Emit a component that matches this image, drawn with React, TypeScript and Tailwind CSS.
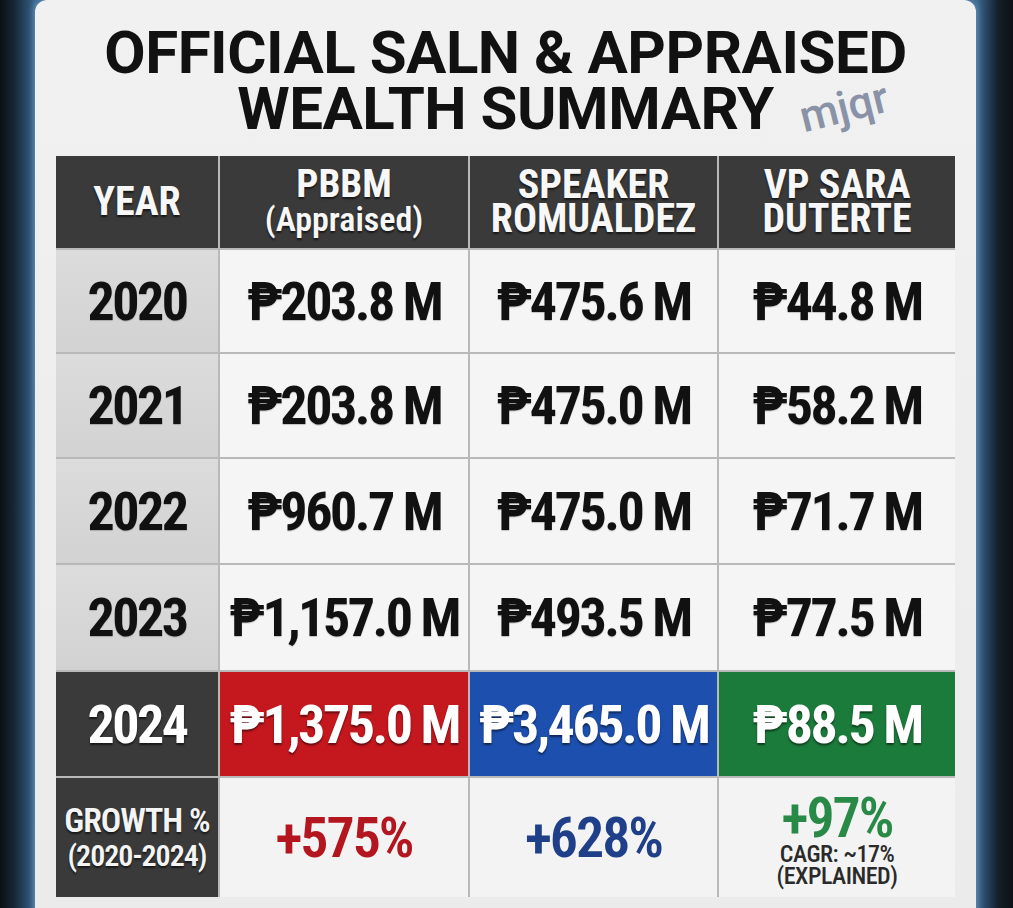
const rows = [
  { year: "2020", v: ["₱203.8 M", "₱475.6 M", "₱44.8 M"] },
  { year: "2021", v: ["₱203.8 M", "₱475.0 M", "₱58.2 M"] },
  { year: "2022", v: ["₱960.7 M", "₱475.0 M", "₱71.7 M"] },
  { year: "2023", v: ["₱1,157.0 M", "₱493.5 M", "₱77.5 M"] },
];

const cond = "font-['Roboto_Condensed','Liberation_Sans_Narrow',sans-serif]";

export default function App() {
  return (
    <div className="w-full h-[908px] overflow-hidden bg-[linear-gradient(to_right,#0c1014_0px,#172634_14px,#30587a_31px,#3d6a90_35px,#3d6a90_977px,#2a4b68_985px,#141f2a_998px,#0c1014_1013px)] pl-[35px]">
      <div className="relative w-[941px] h-[930px] rounded-t-[12px] bg-gradient-to-b from-[#f1f1f1] to-[#ebebeb] shadow-[0_0_6px_1px_rgba(120,160,200,0.7)] pt-[25px] px-[21px]">
        <div className="relative text-center font-['Roboto',sans-serif] font-bold text-[60px] leading-[56px] text-[#111111] tracking-[-0.5px]">
          <div>OFFICIAL SALN &amp; APPRAISED</div>
          <div>WEALTH SUMMARY</div>
          <span className="absolute left-[743px] top-[60px] -rotate-[14deg] font-['Roboto',sans-serif] font-medium text-[44px] leading-[44px] tracking-normal text-[#8a92a7]">
            mjqr
          </span>
        </div>

        <div
          className={`mt-[19px] grid grid-cols-[162px_248px_247px_236px] grid-rows-[92px_102px_103px_104px_105px_104px_119px] gap-[2px] bg-[#b9b9b9] ${cond}`}
        >
          {/* header */}
          <div className="bg-[#3a3a3a] flex items-center justify-center text-[#f7f7f7] font-bold text-[40px] [text-shadow:0_2px_2px_rgba(0,0,0,0.6)]">
            YEAR
          </div>
          <div className="bg-[#3a3a3a] flex flex-col items-center justify-center text-[#f7f7f7] [text-shadow:0_2px_2px_rgba(0,0,0,0.6)]">
            <span className="font-bold text-[39px] leading-[34px]">PBBM</span>
            <span className="font-semibold text-[34px] leading-[36px]">(Appraised)</span>
          </div>
          <div className="bg-[#3a3a3a] flex flex-col items-center justify-center text-[#f7f7f7] font-bold text-[40px] leading-[34px] [text-shadow:0_2px_2px_rgba(0,0,0,0.6)]">
            <span>SPEAKER</span>
            <span>ROMUALDEZ</span>
          </div>
          <div className="bg-[#3a3a3a] flex flex-col items-center justify-center text-[#f7f7f7] font-bold text-[40px] leading-[34px] [text-shadow:0_2px_2px_rgba(0,0,0,0.6)]">
            <span>VP SARA</span>
            <span>DUTERTE</span>
          </div>

          {rows.map((r) => (
            <>
              <div key={r.year + "y"} className="bg-gradient-to-b from-[#dcdcdc] to-[#d2d2d2] flex items-center justify-center text-[#111111] font-bold text-[54px] tracking-[-2.5px] [text-shadow:0_1px_1px_rgba(0,0,0,0.2)]">
                {r.year}
              </div>
              {r.v.map((v, i) => (
                <div key={r.year + i} className="bg-[#f5f5f5] flex items-center justify-center text-[#111111] font-bold text-[54px] tracking-[-2.5px] [text-shadow:0_1px_1px_rgba(0,0,0,0.2)]">
                  {v}
                </div>
              ))}
            </>
          ))}

          {/* 2024 */}
          <div className="bg-[#3a3a3a] flex items-center justify-center text-white font-bold text-[54px] tracking-[-2.5px] [text-shadow:0_2px_2px_rgba(0,0,0,0.6)]">
            2024
          </div>
          <div className="bg-[#c5171e] flex items-center justify-center text-white font-bold text-[54px] tracking-[-2.5px] [text-shadow:0_2px_2px_rgba(0,0,0,0.5)]">
            ₱1,375.0 M
          </div>
          <div className="bg-[#1c4fae] flex items-center justify-center text-white font-bold text-[54px] tracking-[-2.5px] [text-shadow:0_2px_2px_rgba(0,0,0,0.5)]">
            ₱3,465.0 M
          </div>
          <div className="bg-[#1b7b3b] flex items-center justify-center text-white font-bold text-[54px] tracking-[-2.5px] [text-shadow:0_2px_2px_rgba(0,0,0,0.5)]">
            ₱88.5 M
          </div>

          {/* growth */}
          <div className="bg-[#3a3a3a] flex flex-col items-center justify-center text-[#f4f4f4] font-semibold [text-shadow:0_2px_2px_rgba(0,0,0,0.6)]">
            <span className="text-[34px] leading-[35px] tracking-[-1px]">GROWTH %</span>
            <span className="text-[30px] leading-[35px] tracking-[-1px]">(2020-2024)</span>
          </div>
          <div className="bg-[#f3f3f3] flex items-center justify-center text-[#b3161e] font-semibold text-[56px] tracking-[-2px]">
            +575%
          </div>
          <div className="bg-[#f3f3f3] flex items-center justify-center text-[#1f3f88] font-semibold text-[56px] tracking-[-2px]">
            +628%
          </div>
          <div className="bg-[#f3f3f3] flex flex-col items-center justify-center pt-[6px]">
            <span className="text-[#288a46] font-semibold text-[56px] leading-[46px] tracking-[-2px]">+97%</span>
            <span className="text-[#2a2a2a] font-medium text-[24px] leading-[22px] mt-[2px] tracking-[-0.5px]">CAGR: ~17%</span>
            <span className="text-[#2a2a2a] font-medium text-[24px] leading-[22px] tracking-[-0.5px]">(EXPLAINED)</span>
          </div>
        </div>
      </div>
    </div>
  );
}
